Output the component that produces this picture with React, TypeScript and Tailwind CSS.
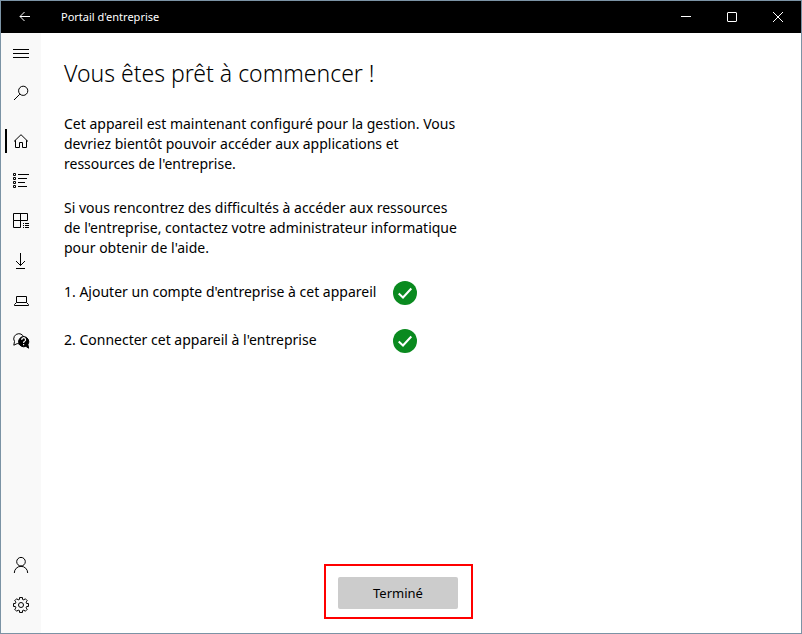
import type { ReactNode } from "react";

type NavItem = {
  label: string;
  icon: ReactNode;
  active?: boolean;
};

// Outline of the settings wheel, eight teeth around a 16x16 box
const gearPoints = Array.from({ length: 8 }, (_, i) => {
  const base = (i * Math.PI) / 4;
  return [
    [-0.26, 5.8],
    [-0.2, 7.6],
    [0.2, 7.6],
    [0.26, 5.8],
  ]
    .map(([a, r]) => `${(8 + r * Math.cos(base + a)).toFixed(2)},${(8 + r * Math.sin(base + a)).toFixed(2)}`)
    .join(" ");
}).join(" ");

const topItems: NavItem[] = [
  { label: "Menu", icon: <path d="M0 4.5H16M0 8.5H16M0 12.5H16" /> },
  {
    label: "Rechercher",
    icon: (
      <>
        <circle cx="10.2" cy="5.8" r="4.6" />
        <path d="M6.8 9.2L1 15" />
      </>
    ),
  },
];

const mainItems: NavItem[] = [
  {
    label: "Accueil",
    active: true,
    icon: <path d="M1 8.5L8 1.7L15 8.5M2.5 7.2V14.5H6.5V9.5H9.5V14.5H13.5V7.2" />,
  },
  {
    label: "Applications",
    icon: (
      <path d="M.5 .5h2v2h-2zM.5 4.5h2v2h-2zM.5 8.5h2v2h-2zM.5 12.5h2v2h-2zM5 1.5H16M5 5.5H14M5 9.5H12M5 13.5H14" />
    ),
  },
  {
    label: "Catégories",
    icon: (
      <path d="M.5 .5H14.5V7.5H.5zM7.5 .5V14.5H.5V7.5M10 10.5H11M12 10.5H16M10 12.5H11M12 12.5H16M10 14.5H11M12 14.5H16" />
    ),
  },
  { label: "Téléchargements", icon: <path d="M7.5 0V12.5M3 8L7.5 12.5L12 8M3 15.5H12" /> },
  { label: "Appareils", icon: <path d="M3.5 3.5H13.5V9.5H3.5zM3.5 9.5L1.5 11.5V12.5H15.5V11.5L13.5 9.5" /> },
  {
    label: "Aide et support",
    icon: (
      <>
        <path d="M5.8 .7a5.1 5.1 0 0 0-4.3 7.8L.8 12.2L4.2 10.6A5.1 5.1 0 1 0 5.8 .7z" />
        <path
          d="M10.7 3.6a5.1 5.1 0 1 0 2.2 9.7L15.6 15.2L14.9 11.6A5.1 5.1 0 0 0 10.7 3.6z"
          fill="currentColor"
        />
        <path d="M8.8 7a1.9 1.9 0 1 1 2.8 1.3Q10.6 8.8 10.6 9.9M10.6 11V12.2" stroke="#fff" strokeWidth="1.2" />
      </>
    ),
  },
];

const bottomItems: NavItem[] = [
  {
    label: "Profil",
    icon: (
      <>
        <circle cx="8" cy="4.7" r="4.3" />
        <path d="M1.3 16A6.7 6.7 0 0 1 14.7 16" />
      </>
    ),
  },
  {
    label: "Paramètres",
    icon: (
      <>
        <polygon points={gearPoints} strokeLinejoin="round" />
        <circle cx="8" cy="8" r="2.5" />
      </>
    ),
  },
];

const steps = ["Ajouter un compte d'entreprise à cet appareil", "Connecter cet appareil à l'entreprise"];

function NavButton({ label, icon, active }: NavItem) {
  return (
    <button aria-label={label} className="relative grid size-10 place-items-center">
      {active && <span className="absolute left-1 h-6 w-0.5 bg-black" />}
      <svg className="size-4 overflow-visible" viewBox="0 0 16 16" fill="none" stroke="currentColor">
        {icon}
      </svg>
    </button>
  );
}

function WindowButton({ label, children }: { label: string; children: ReactNode }) {
  return (
    <button aria-label={label} className="grid h-8 w-[46px] place-items-center">
      <svg className="size-2.5 overflow-visible" viewBox="0 0 10 10" fill="none" stroke="currentColor">
        {children}
      </svg>
    </button>
  );
}

function CheckBadge() {
  return (
    <svg className="size-6 shrink-0" viewBox="0 0 24 24" fill="none">
      <circle cx="12" cy="12" r="12" fill="#0a8a1f" />
      <path d="M5.7 12.5L10 16.5L18.3 7.5" stroke="#fff" strokeWidth="2" />
    </svg>
  );
}

export default function App() {
  return (
    <div className="flex min-h-screen flex-col border border-[#7b93a5] bg-white font-['Noto_Sans',sans-serif] text-sm leading-5 text-black">
      <header className="flex h-8 items-center bg-black text-white">
        <button aria-label="Retour" className="grid h-8 w-12 place-items-center">
          <svg className="size-2.5 overflow-visible" viewBox="0 0 10 10" fill="none" stroke="currentColor">
            <path d="M0 4.5H10M4.5 0L0 4.5L4.5 9" />
          </svg>
        </button>
        <span className="ml-3 flex-1 text-[11px]">Portail d'entreprise</span>
        <WindowButton label="Réduire">
          <path d="M0 4.5H10" />
        </WindowButton>
        <WindowButton label="Agrandir">
          <rect x="0.5" y="0.5" width="9" height="9" rx="0.5" />
        </WindowButton>
        <WindowButton label="Fermer">
          <path d="M0 0L10 10M10 0L0 10" />
        </WindowButton>
      </header>

      <div className="flex flex-1">
        <nav className="flex w-10 flex-col bg-[#f9f9f9] pb-2">
          {topItems.map((item) => (
            <NavButton key={item.label} {...item} />
          ))}
          <div className="mt-2 flex-1">
            {mainItems.map((item) => (
              <NavButton key={item.label} {...item} />
            ))}
          </div>
          {bottomItems.map((item) => (
            <NavButton key={item.label} {...item} />
          ))}
        </nav>

        <main className="flex flex-1 flex-col pt-6 pr-17 pb-3.5 pl-[23px]">
          <h1 className="text-[23px] leading-8 font-light">Vous êtes prêt à commencer !</h1>
          <div className="mt-[25px] max-w-[400px] space-y-6">
            <p>
              Cet appareil est maintenant configuré pour la gestion. Vous devriez bientôt pouvoir accéder aux
              applications et ressources de l'entreprise.
            </p>
            <p>
              Si vous rencontrez des difficultés à accéder aux ressources de l'entreprise, contactez votre
              administrateur informatique pour obtenir de l'aide.
            </p>
          </div>
          <ol className="mt-[23px] space-y-6">
            {steps.map((step, i) => (
              <li key={step} className="flex h-6 leading-[22px]">
                <span className="w-[329px] whitespace-nowrap">
                  {i + 1}. {step}
                </span>
                <CheckBadge />
              </li>
            ))}
          </ol>
          <div className="mt-auto self-center border-2 border-[#ff0000] pt-[11px] pr-[13px] pb-2 pl-3">
            <button className="h-8 w-[120px] rounded-xs bg-[#cccccc] text-[13px]">Terminé</button>
          </div>
        </main>
      </div>
    </div>
  );
}
